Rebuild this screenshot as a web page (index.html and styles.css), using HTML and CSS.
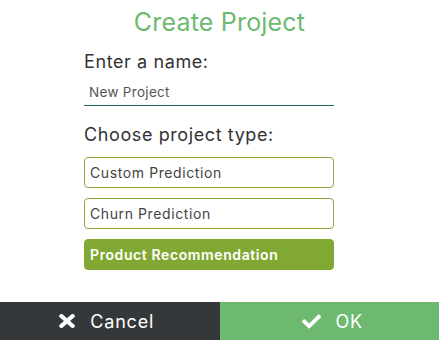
FILE: index.html
```html
<!DOCTYPE html>
<html lang="en">
<head>
  <meta charset="UTF-8">
  <title>Create Project</title>
  <link rel="stylesheet" href="styles.css">
</head>
<body>
  <div class="dialog">
    <div class="dialog-body">
      <h1 class="title">Create Project</h1>

      <div class="form">
        <label class="field-label name-label" for="projectName">Enter a name:</label>
        <input class="name-input" id="projectName" type="text" value="New Project">

        <div class="field-label type-label">Choose project type:</div>
        <div class="type-list">
          <div class="type-option">Custom Prediction</div>
          <div class="type-option">Churn Prediction</div>
          <div class="type-option selected">Product Recommendation</div>
        </div>
      </div>
    </div>

    <!-- footer buttons -->
    <div class="dialog-footer">
      <button class="footer-btn cancel">
        <svg class="icon icon-times" viewBox="0 80 352 352" preserveAspectRatio="none"><path d="M242.72 256l100.07-100.07c12.28-12.28 12.28-32.19 0-44.48l-22.24-22.24c-12.28-12.28-32.19-12.28-44.48 0L176 189.28 75.930 89.21c-12.28-12.28-32.19-12.28-44.48 0L9.21 111.45c-12.28 12.28-12.28 32.19 0 44.48L109.28 256 9.21 356.07c-12.28 12.28-12.28 32.19 0 44.48l22.24 22.24c12.28 12.28 32.2 12.28 44.48 0L176 322.72l100.07 100.07c12.28 12.28 32.2 12.28 44.48 0l22.24-22.24c12.28-12.28 12.28-32.19 0-44.48L242.72 256z"/></svg>
        Cancel
      </button>
      <button class="footer-btn ok">
        <svg class="icon icon-check" viewBox="0 64 512 384"><path d="M173.898 439.404l-166.4-166.4c-9.997-9.997-9.997-26.206 0-36.204l36.203-36.204c9.997-9.998 26.207-9.998 36.204 0L192 312.69 432.095 72.596c9.997-9.997 26.207-9.997 36.204 0l36.203 36.204c9.997 9.997 9.997 26.206 0 36.204l-294.4 294.401c-9.998 9.997-26.207 9.997-36.204-.001z"/></svg>
        OK
      </button>
    </div>
  </div>
</body>
</html>
```

FILE: styles.css
```css
body {
  margin: 0;
  background: #ffffff;
  font-family: 'Inter', 'Noto Sans', sans-serif;
  color: #333333;
}

.dialog {
  width: 439px;
  height: 340px;
  display: flex;
  flex-direction: column;
}

.dialog-body {
  flex: 1;
}

.title {
  margin: 0;
  padding-top: 7px;
  text-align: center;
  font-size: 25px;
  font-weight: 400;
  letter-spacing: 0.2px;
  line-height: 30px;
  color: #6dba70;
}

.form {
  width: 250px;
  margin-left: 84px;
  display: flex;
  flex-direction: column;
}

.field-label {
  font-size: 18px;
  letter-spacing: 0.6px;
  line-height: 22px;
  color: #333333;
}

.name-label {
  margin-top: 14px;
}

.name-input {
  margin-top: 10px;
  padding: 0 0 4px 5px;
  border: none;
  border-bottom: 1.5px solid #1f6b63;
  font-family: inherit;
  font-size: 13.5px;
  letter-spacing: 0.3px;
  line-height: 18px;
  color: #555555;
  outline: none;
}

.type-label {
  margin-top: 18px;
}

.type-list {
  margin-top: 11px;
  display: flex;
  flex-direction: column;
  gap: 10px;
}

.type-option {
  height: 29px;
  line-height: 29px;
  padding: 0 5px;
  border: 1px solid #86ab3c;
  border-radius: 4px;
  font-size: 14px;
  letter-spacing: 0.6px;
  color: #444444;
}

.type-option.selected {
  background: #82a834;
  border-color: #82a834;
  color: #ffffff;
  font-weight: 600;
}

.dialog-footer {
  height: 38px;
  display: flex;
}

.footer-btn {
  flex: 1;
  border: none;
  margin: 0;
  display: flex;
  align-items: center;
  justify-content: center;
  gap: 15px;
  font-family: inherit;
  font-size: 18px;
  letter-spacing: 0.8px;
  color: #ffffff;
  cursor: pointer;
}

.footer-btn.cancel {
  background: #35383b;
  padding: 0 6px 0 0;
}

.footer-btn.ok {
  background: #6cb96f;
  padding: 0 0 0 6px;
}

.icon {
  fill: #ffffff;
}

.icon-times {
  width: 16px;
  height: 14px;
}

.icon-check {
  width: 19px;
  height: 15px;
}
```
